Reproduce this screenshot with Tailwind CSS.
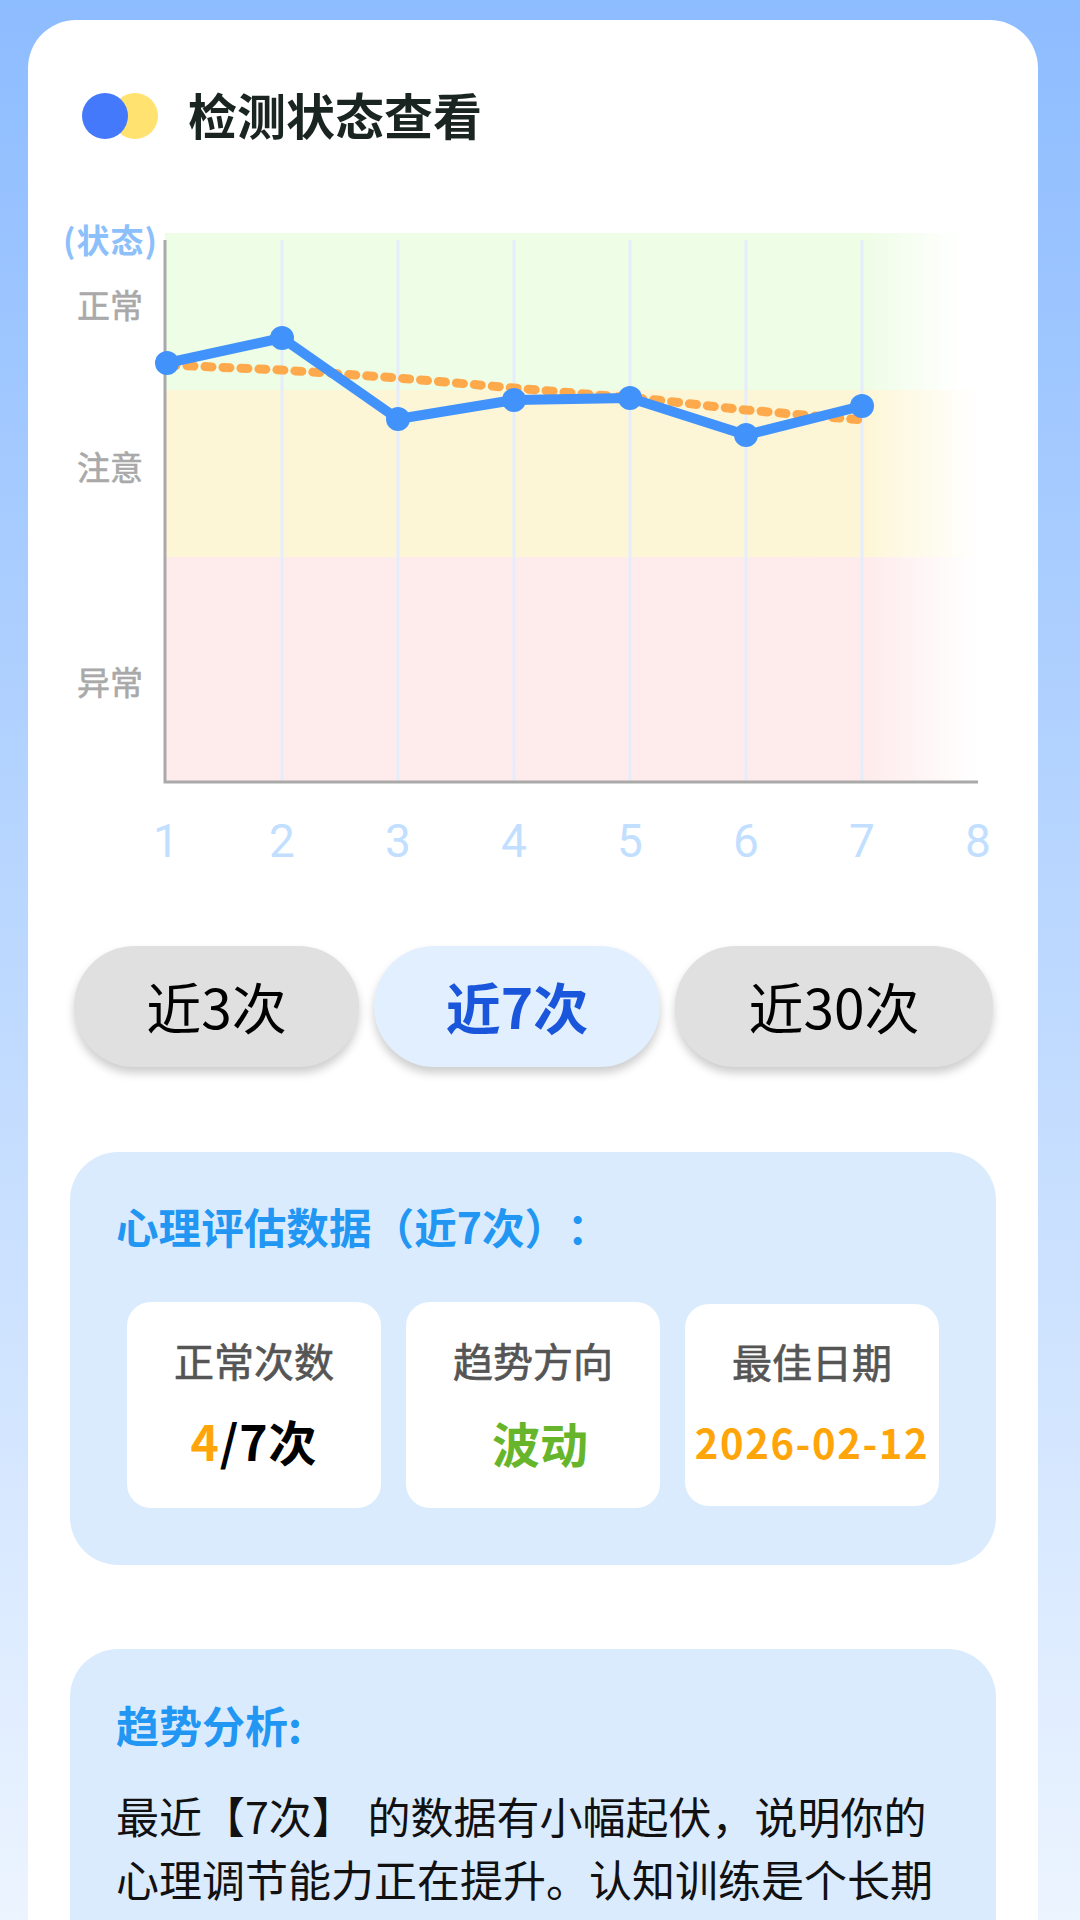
<!DOCTYPE html>
<html lang="zh-CN">

<head>
    <meta charset="UTF-8">
    <meta name="viewport" content="width=device-width, initial-scale=1.0">
    <title>检测状态查看</title>
    <script src="https://cdn.jsdelivr.net/npm/@tailwindcss/browser@4"></script>
</head>

<body class="font-['Noto_Sans_CJK_SC',sans-serif]">
    <div class="w-[1080px] h-[1920px] overflow-hidden pt-[20px] pl-[28px] bg-linear-to-b from-[#8dbcff] to-[#ecf4ff]">
        <div class="w-[1010px] h-[2100px] bg-white rounded-[48px] pt-[72px]">

            <!-- Header -->
            <div class="flex items-center h-[50px] pl-[54px]">
                <div class="relative w-[76px] h-[46px] mt-[-2px]">
                    <div class="absolute left-[30px] top-0 w-[46px] h-[46px] rounded-full bg-[#ffe26f]"></div>
                    <div class="absolute left-0 top-0 w-[46px] h-[46px] rounded-full bg-[#4479fb]"></div>
                </div>
                <h1 class="ml-[30px] mt-[-6px] text-[49px] leading-[50px] font-bold text-[#1a2522]">检测状态查看</h1>
            </div>

            <!-- Chart -->
            <div class="relative mt-[91px] ml-[137px] w-[813px]">
                <div class="h-[157px] bg-linear-to-r from-[#eefde6] from-[86%] to-white to-[98%]"></div>
                <div class="h-[167px] bg-linear-to-r from-[#fdf6d6] from-[86%] to-white to-[100%]"></div>
                <div class="h-[225px] bg-linear-to-r from-[#feebec] from-[86%] to-white to-[100%]"></div>

                <div class="absolute left-[-102px] top-[-14px] text-[33px] leading-[40px] font-bold text-[#8cc0fb] tracking-[1px]">(状态)</div>
                <div class="absolute left-[-88px] top-[51px] text-[33px] leading-[40px] text-[#a9a9a9] [-webkit-text-stroke:0.6px_#a9a9a9]">正常</div>
                <div class="absolute left-[-88px] top-[213px] text-[33px] leading-[40px] text-[#a9a9a9] [-webkit-text-stroke:0.6px_#a9a9a9]">注意</div>
                <div class="absolute left-[-88px] top-[428px] text-[33px] leading-[40px] text-[#a9a9a9] [-webkit-text-stroke:0.6px_#a9a9a9]">异常</div>

                <svg class="absolute left-0 top-0 overflow-visible" width="813" height="549" viewBox="0 0 813 549" fill="none">
                    <path d="M117 7V548M233 7V548M349 7V548M465 7V548M581 7V548M697 7V548" stroke="#e5edfd" stroke-width="3" />
                    <path d="M0 7V549H813" stroke="#a9a9a9" stroke-width="3" />
                    <path d="M4 132L117 137L233 145L349 155L492 167L581 177L697 187" stroke="#ffa94d" stroke-width="9" stroke-linecap="round" stroke-dasharray="7 11" />
                    <path d="M2 130L117 105L233 186L349 167L465 165L581 202L697 173" stroke="#4193fb" stroke-width="10" stroke-linejoin="round" />
                    <g fill="#4193fb">
                        <circle cx="2" cy="130" r="12" />
                        <circle cx="117" cy="105" r="12" />
                        <circle cx="233" cy="186" r="12" />
                        <circle cx="349" cy="167" r="12" />
                        <circle cx="465" cy="165" r="12" />
                        <circle cx="581" cy="202" r="12" />
                        <circle cx="697" cy="173" r="12" />
                    </g>
                </svg>
            </div>

            <!-- X axis -->
            <div class="flex mt-[31px] ml-[80px] h-[56px] text-[46px] leading-[56px] text-[#c2dfff] font-['Roboto',sans-serif]">
                <span class="w-[116px] text-center">1</span>
                <span class="w-[116px] text-center">2</span>
                <span class="w-[116px] text-center">3</span>
                <span class="w-[116px] text-center">4</span>
                <span class="w-[116px] text-center">5</span>
                <span class="w-[116px] text-center">6</span>
                <span class="w-[116px] text-center">7</span>
                <span class="w-[116px] text-center">8</span>
            </div>

            <!-- Range buttons -->
            <div class="flex mt-[77px] ml-[46px] gap-[15px]">
                <div class="w-[285px] h-[121px] pb-[2px] rounded-full bg-[#e0e0e0] shadow-[0_6px_10px_rgba(0,0,0,0.2)] flex items-center justify-center text-[55px] text-black">近3次</div>
                <div class="w-[286px] h-[121px] pb-[2px] rounded-full bg-[#e1effe] shadow-[0_6px_10px_rgba(0,0,0,0.2)] flex items-center justify-center text-[55px] font-bold text-[#1a56db]">近7次</div>
                <div class="w-[318px] h-[121px] pb-[2px] rounded-full bg-[#e0e0e0] shadow-[0_6px_10px_rgba(0,0,0,0.2)] flex items-center justify-center text-[55px] text-black">近30次</div>
            </div>

            <!-- Assessment data -->
            <div class="mt-[85px] ml-[42px] w-[926px] h-[413px] rounded-[48px] bg-[#daebfe] pt-[47px] pl-[46px]">
                <h2 class="text-[42.6px] leading-[54px] font-bold text-[#2196f3] [text-spacing-trim:space-all]">心理评估数据（近7次）：</h2>
                <div class="flex items-center mt-[49px] ml-[11px] gap-[25px]">
                    <div class="w-[254px] h-[206px] rounded-[24px] bg-white flex flex-col items-center pt-[36px]">
                        <div class="text-[40px] leading-[44px] text-[#555555] [-webkit-text-stroke:0.7px_#555555]">正常次数</div>
                        <div class="mt-[35px] text-[48px] leading-[46px] font-bold text-black tracking-[1px]"><span class="text-[#ffa50a]">4</span>/7次</div>
                    </div>
                    <div class="w-[254px] h-[206px] rounded-[24px] bg-white flex flex-col items-center pt-[36px]">
                        <div class="text-[40px] leading-[44px] text-[#555555] [-webkit-text-stroke:0.7px_#555555]">趋势方向</div>
                        <div class="mt-[37px] ml-[14px] text-[48px] leading-[46px] font-bold text-[#67b52a]">波动</div>
                    </div>
                    <div class="w-[254px] h-[202px] rounded-[24px] bg-white flex flex-col items-center pt-[35px]">
                        <div class="text-[40px] leading-[44px] text-[#555555] [-webkit-text-stroke:0.7px_#555555]">最佳日期</div>
                        <div class="mt-[36px] text-[40px] leading-[46px] font-bold text-[#ffa50a] tracking-[1.6px]">2026-02-12</div>
                    </div>
                </div>
            </div>

            <!-- Trend analysis -->
            <div class="mt-[84px] ml-[42px] w-[926px] h-[400px] rounded-[48px] bg-[#daebfe] pt-[47px] pl-[46px]">
                <h2 class="text-[43px] leading-[56px] font-bold text-[#2196f3]">趋势分析:</h2>
                <p class="mt-[32px] w-[833px] text-[43px] leading-[63px] text-[#111111]">最近【7次】 <span class="ml-[3px]">的数据有小幅起伏，说明你的</span>心理调节能力正在提升。认知训练是个长期</p>
            </div>
        </div>
    </div>
</body>

</html>
